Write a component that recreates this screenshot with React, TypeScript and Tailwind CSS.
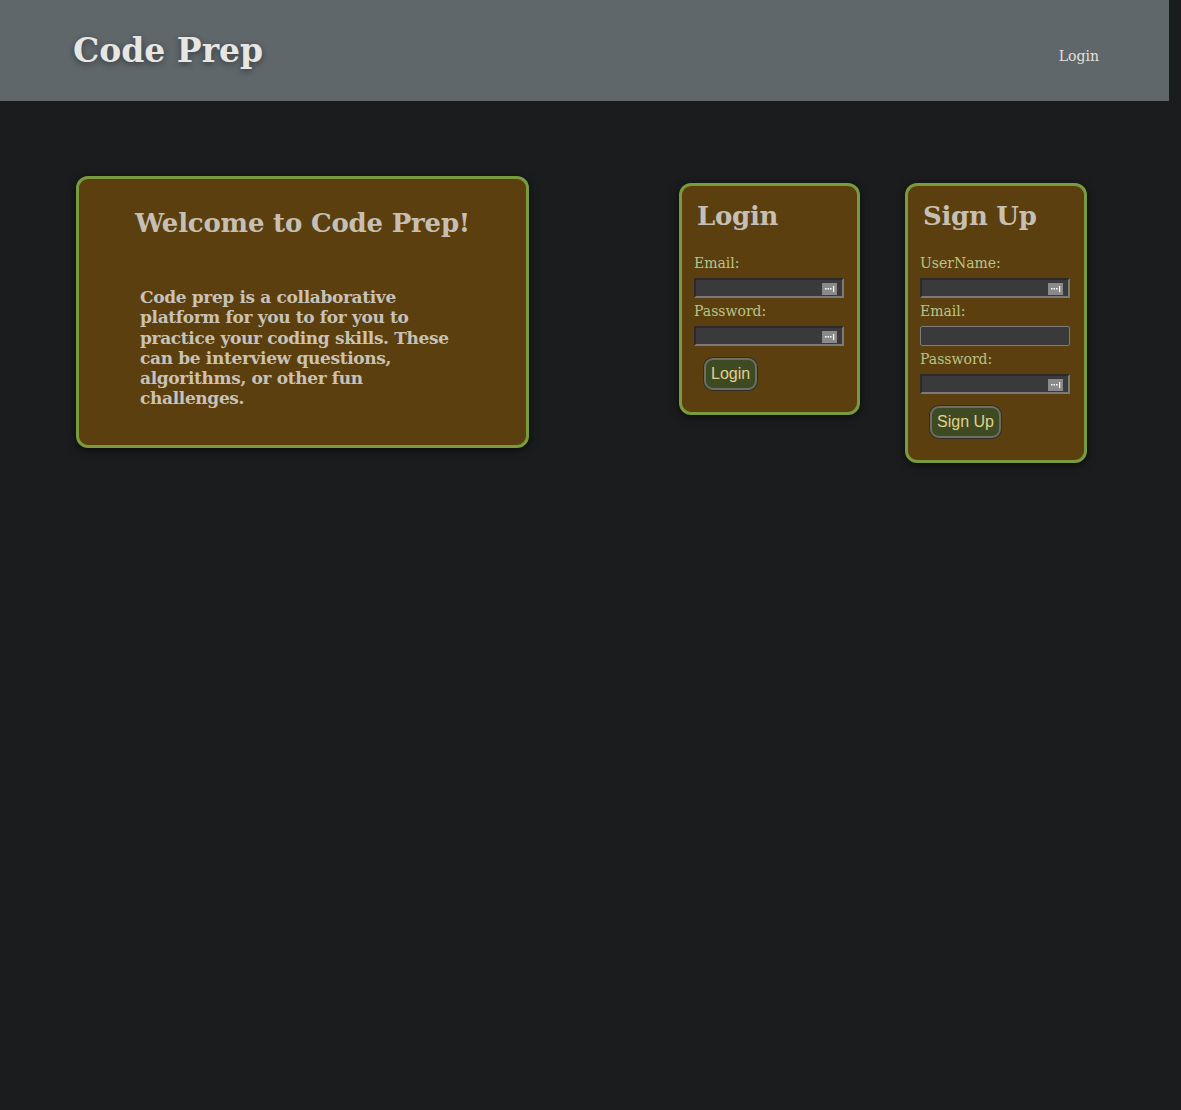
import type { ReactNode } from 'react';

const serif = { fontFamily: '"DejaVu Serif", Georgia, serif' };

function KeyIcon() {
  return (
    <span className="absolute right-[5px] top-[3px] flex h-[12px] w-[15px] items-center justify-center bg-[#8a8a8a]">
      <svg width="11" height="8" viewBox="0 0 11 8">
        <rect x="1" y="3" width="1.5" height="1.5" fill="#fff" />
        <rect x="3.5" y="3" width="1.5" height="1.5" fill="#fff" />
        <rect x="6" y="3" width="1.5" height="1.5" fill="#fff" />
        <rect x="9" y="1" width="1.2" height="6" fill="#fff" />
      </svg>
    </span>
  );
}

function Field({ label, plain }: { label: string; plain?: boolean }) {
  return (
    <div className="mb-[1px]">
      <label className="block text-[14px] leading-[24px] text-[#bac48a]" style={serif}>
        {label}
      </label>
      {plain ? (
        <div className="mt-[3px] h-[20px] w-[150px] rounded-[2px] border border-[#7d7d7d] bg-[#3a3a3a]" />
      ) : (
        <div className="relative mt-[3px] h-[20px] w-[150px] border-2 border-t-[#2a2a2a] border-l-[#2a2a2a] border-b-[#7a7a7a] border-r-[#7a7a7a] bg-[#3a3a3a]">
          <KeyIcon />
        </div>
      )}
    </div>
  );
}

function FormCard({
  title,
  button,
  wide,
  children,
}: {
  title: string;
  button: string;
  wide?: boolean;
  children: ReactNode;
}) {
  return (
    <div
      className={`mt-[7px] ${wide ? 'w-[182px]' : 'w-[181px]'} rounded-[12px] border-[3px] border-[#799a3d] bg-[#5b3f0e] px-[12px] pb-[22px] pt-[14px] shadow-[0_2px_8px_rgba(0,0,0,0.6)]`}
    >
      <h2
        className="mb-[19px] pl-[3px] text-[26px] font-bold leading-[32px] tracking-[-0.3px] text-[#c5bfb4]"
        style={serif}
      >
        {title}
      </h2>
      {children}
      <button
        type="button"
        className="ml-[10px] mt-[11px] h-[32px] rounded-[9px] border-2 border-[#6e6e66] bg-[#3e4a22] px-[5px] text-[16px] text-[#e2d08e] shadow-[0_0_0_1px_#2f2f28]"
        style={{ fontFamily: '"Liberation Sans", Arial, sans-serif' }}
      >
        {button}
      </button>
    </div>
  );
}

export default function App() {
  return (
    <div className="min-h-[1110px] w-full bg-[#1b1c1e]">
      <header className="flex h-[101px] w-[1169px] items-center justify-between bg-[#5f676b] pl-[73px] pr-[70px]">
        <h1
          className="text-[33px] font-bold leading-none text-[#e8e6e3] [text-shadow:0_2px_6px_rgba(0,0,0,0.45)]"
          style={serif}
        >
          Code Prep
        </h1>
        <a className="mt-[12px] text-[14px] text-[#e4e1dc]" style={serif}>
          Login
        </a>
      </header>

      <main className="flex w-[1169px] items-start pl-[76px] pr-[82px] pt-[75px]">
        <section className="h-[272px] w-[453px] rounded-[12px] border-[3px] border-[#799a3d] bg-[#5b3f0e] pt-[26px] shadow-[0_2px_8px_rgba(0,0,0,0.6)]">
          <h2
            className="text-center text-[26px] font-bold leading-[36px] tracking-[-0.2px] text-[#c5bfb4]"
            style={serif}
          >
            Welcome to Code Prep!
          </h2>
          <p
            className="ml-[61px] mt-[46px] w-[330px] text-[17px] font-bold leading-[20.3px] tracking-[-0.35px] text-[#c8c2b8]"
            style={serif}
          >
            Code prep is a collaborative platform for you to for you to practice your coding skills. These can be
            interview questions, algorithms, or other fun challenges.
          </p>
        </section>

        <div className="ml-auto flex items-start gap-[45px]">
          <FormCard title="Login" button="Login">
            <Field label="Email:" />
            <Field label="Password:" />
          </FormCard>
          <FormCard title="Sign Up" button="Sign Up" wide>
            <Field label="UserName:" />
            <Field label="Email:" plain />
            <Field label="Password:" />
          </FormCard>
        </div>
      </main>
    </div>
  );
}
